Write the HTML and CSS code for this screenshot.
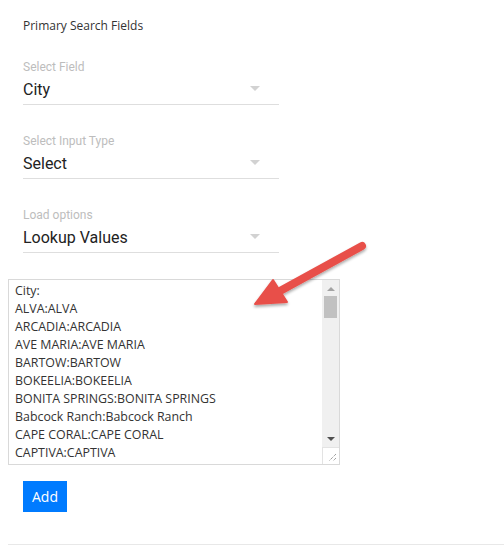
FILE: index.html
```html
<!DOCTYPE html>
<html>
<head>
<meta charset="utf-8">
<link rel="stylesheet" href="styles.css">
</head>
<body>
<div class="page">
  <div class="heading">Primary Search Fields</div>
  <div class="field">
    <div class="label">Select Field</div>
    <div class="value"><span>City</span><span class="caret"></span></div>
  </div>
  <div class="field">
    <div class="label">Select Input Type</div>
    <div class="value"><span>Select</span><span class="caret"></span></div>
  </div>
  <div class="field last">
    <div class="label">Load options</div>
    <div class="value"><span>Lookup Values</span><span class="caret"></span></div>
  </div>
  <div class="textbox">
    <div class="lines">
      <div>City:</div>
      <div>ALVA:ALVA</div>
      <div>ARCADIA:ARCADIA</div>
      <div>AVE MARIA:AVE MARIA</div>
      <div>BARTOW:BARTOW</div>
      <div>BOKEELIA:BOKEELIA</div>
      <div>BONITA SPRINGS:BONITA SPRINGS</div>
      <div>Babcock Ranch:Babcock Ranch</div>
      <div>CAPE CORAL:CAPE CORAL</div>
      <div>CAPTIVA:CAPTIVA</div>
    </div>
    <div class="scrollbar">
      <div class="track">
        <span class="up"></span>
        <span class="thumb"></span>
        <span class="down"></span>
      </div>
      <div class="grip">
        <svg width="16" height="16" viewBox="0 0 16 16"><path d="M13 6 L6 13 M13 10 L10 13" stroke="#777" stroke-width="1" stroke-dasharray="1 1" fill="none"/></svg>
      </div>
    </div>
  </div>
  <div class="actions"><button class="add">Add</button></div>
  <div class="rule"></div>
  <svg class="arrow" width="140" height="90" viewBox="0 0 140 90">
    <defs>
      <filter id="sh" x="-20%" y="-20%" width="140%" height="160%">
        <feGaussianBlur in="SourceAlpha" stdDeviation="1.5"/>
        <feOffset dx="0" dy="2" result="b"/>
        <feComponentTransfer><feFuncA type="linear" slope="0.35"/></feComponentTransfer>
        <feMerge><feMergeNode/><feMergeNode in="SourceGraphic"/></feMerge>
      </filter>
    </defs>
    <g filter="url(#sh)">
      <line x1="122" y1="16" x2="40" y2="61" stroke="#e8504a" stroke-width="8" stroke-linecap="round"/>
      <polygon points="15,74 33,50 47,72" fill="#e8504a" stroke="#e8504a" stroke-width="2" stroke-linejoin="round"/>
    </g>
  </svg>
</div>
</body>
</html>
```
FILE: styles.css
```css
html, body { margin: 0; padding: 0; background: #fff; }
.page {
  position: relative;
  width: 504px;
  height: 552px;
  padding: 18px 0 0 0;
  box-sizing: border-box;
}
.heading {
  margin-left: 23px;
  font-family: "Open Sans", "Liberation Sans", sans-serif;
  font-size: 12px;
  line-height: 16px;
  color: #333;
  margin-bottom: 26px;
}
.field {
  margin-left: 23px;
  width: 256px;
  margin-bottom: 29px;
  font-family: Roboto, "Liberation Sans", sans-serif;
}
.field.last { margin-bottom: 26px; }
.label {
  font-size: 12px;
  line-height: 14px;
  color: #bdbdbd;
}
.value {
  margin-top: 5px;
  font-size: 16px;
  line-height: 20px;
  color: #222;
  padding-bottom: 5px;
  border-bottom: 1px solid #dedede;
  display: flex;
  justify-content: space-between;
  align-items: center;
}
.value span:first-child { position: relative; top: 1px; }
.caret {
  width: 0; height: 0;
  border-left: 5px solid transparent;
  border-right: 5px solid transparent;
  border-top: 5px solid #d2d2d2;
  margin-right: 19px;
  margin-bottom: 2px;
}
.textbox {
  margin: 0 0 0 8px;
  width: 332px;
  height: 186px;
  box-sizing: border-box;
  border: 1px solid #d9d9d9;
  display: flex;
  overflow: hidden;
}
.lines {
  flex: 1;
  padding: 2px 0 0 6px;
  font-family: "Open Sans", "Liberation Sans", sans-serif;
  font-size: 12.4px;
  line-height: 18px;
  color: #333;
  white-space: nowrap;
}
.scrollbar {
  width: 17px;
  display: flex;
  flex-direction: column;
}
.track {
  flex: 1;
  background: #f0f0f0;
  position: relative;
  display: flex;
  flex-direction: column;
  align-items: center;
}
.up {
  margin-top: 7px;
  width: 0; height: 0;
  border-left: 4px solid transparent;
  border-right: 4px solid transparent;
  border-bottom: 4px solid #a3a3a3;
}
.thumb {
  margin-top: 5px;
  width: 13px;
  height: 22px;
  background: #c1c1c1;
}
.down {
  margin-top: auto;
  margin-bottom: 6px;
  width: 0; height: 0;
  border-left: 4px solid transparent;
  border-right: 4px solid transparent;
  border-top: 4px solid #505050;
}
.grip {
  height: 16px;
  border-left: 1px solid #e3e3e3;
  border-top: 1px solid #e3e3e3;
  background: #fff;
}
.grip svg { display: block; }
.actions { margin: 16px 0 0 23px; }
.add {
  display: block;
  width: 44px;
  height: 31px;
  border: 0;
  padding: 0;
  background: #007bff;
  color: #fff;
  font-family: "Open Sans", "Liberation Sans", sans-serif;
  font-size: 14px;
}
.rule {
  margin: 32px 0 0 8px;
  height: 1px;
  background: #e8e8e8;
}
.arrow {
  position: absolute;
  left: 240px;
  top: 230px;
}
```
